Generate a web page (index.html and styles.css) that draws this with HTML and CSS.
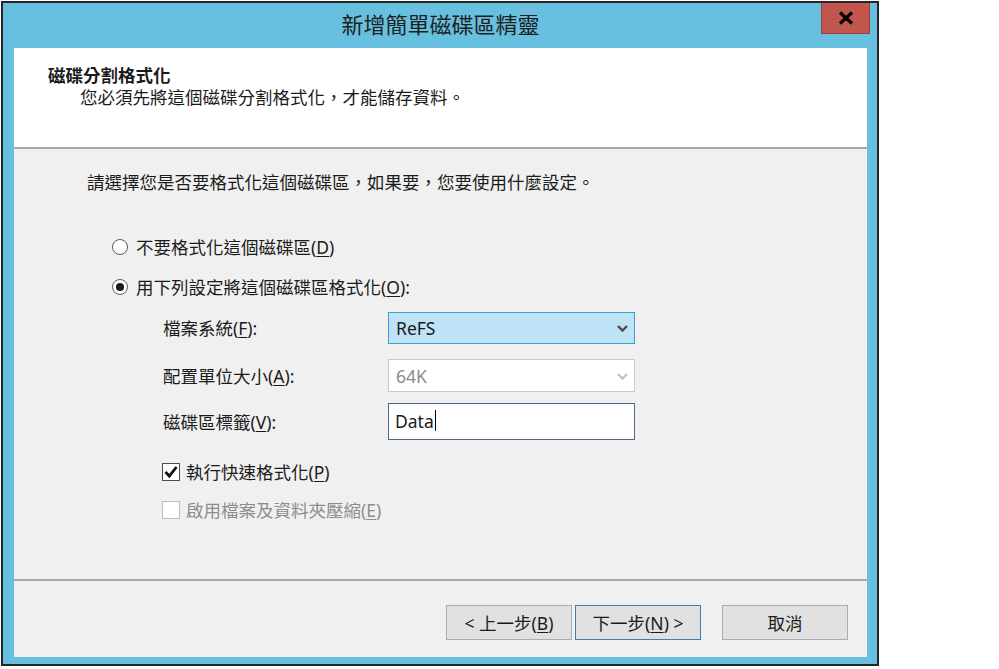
FILE: index.html
```html
<!DOCTYPE html>
<html lang="zh-Hant">
<head>
<meta charset="utf-8">
<title>新增簡單磁碟區精靈</title>
<link rel="stylesheet" href="styles.css">
</head>
<body>
<div class="window">
  <div class="titlebar">
    <div class="tb-spacer"></div>
    <div class="tb-title">新增簡單磁碟區精靈</div>
    <div class="tb-right">
      <div class="close-btn">
        <svg width="16" height="14" viewBox="0 0 16 14"><path d="M2 1.5 L14 12.5 M14 1.5 L2 12.5" stroke="#000" stroke-width="3.2" stroke-linecap="butt"/></svg>
      </div>
    </div>
  </div>
  <div class="client">
    <div class="header">
      <div class="h-title">磁碟分割格式化</div>
      <div class="h-sub">您必須先將這個磁碟分割格式化，才能儲存資料。</div>
    </div>
    <div class="body">
      <div class="question">請選擇您是否要格式化這個磁碟區，如果要，您要使用什麼設定。</div>
      <div class="radio-row first">
        <span class="radio"></span>
        <span class="label">不要格式化這個磁碟區(<u>D</u>)</span>
      </div>
      <div class="radio-row second">
        <span class="radio checked"><span class="dot"></span></span>
        <span class="label">用下列設定將這個磁碟區格式化(<u>O</u>):</span>
      </div>
      <div class="form-row r1">
        <span class="f-label">檔案系統(<u>F</u>):</span>
        <div class="select active">
          <span class="sel-text">ReFS</span>
          <svg class="chev" width="11" height="7" viewBox="0 0 11 7"><path d="M1 1 L5.5 5.5 L10 1" fill="none" stroke="#4a4a4a" stroke-width="2.4"/></svg>
        </div>
      </div>
      <div class="form-row r2">
        <span class="f-label">配置單位大小(<u>A</u>):</span>
        <div class="select disabled">
          <span class="sel-text">64K</span>
          <svg class="chev" width="11" height="7" viewBox="0 0 11 7"><path d="M1 1 L5.5 5.5 L10 1" fill="none" stroke="#c4c4c4" stroke-width="2.4"/></svg>
        </div>
      </div>
      <div class="form-row r3">
        <span class="f-label">磁碟區標籤(<u>V</u>):</span>
        <div class="textbox"><span class="tb-text">Data</span><span class="caret"></span></div>
      </div>
      <div class="check-row c1">
        <span class="checkbox">
          <svg width="16" height="16" viewBox="0 0 16 16"><path d="M2.5 8 L6.3 12 L13.5 3" fill="none" stroke="#111" stroke-width="2.8"/></svg>
        </span>
        <span class="label">執行快速格式化(<u>P</u>)</span>
      </div>
      <div class="check-row c2">
        <span class="checkbox disabled"></span>
        <span class="label dim">啟用檔案及資料夾壓縮(<u>E</u>)</span>
      </div>
    </div>
    <div class="footer">
      <div class="btn">&lt; 上一步(<u>B</u>)</div>
      <div class="btn default">下一步(<u>N</u>) &gt;</div>
      <div class="btn cancel">取消</div>
    </div>
  </div>
</div>
</body>
</html>
```
FILE: styles.css
```css
* { box-sizing: border-box; }
html, body { margin: 0; padding: 0; background: #ffffff; }
body {
  font-family: "Noto Sans", "Noto Sans CJK TC", sans-serif;
  font-size: 17.5px;
  line-height: 22px;
  color: #1b1b1b;
}
u { text-decoration: underline; text-underline-offset: 2px; text-decoration-thickness: 1px; }

.window {
  margin: 1px 0 0 1px;
  width: 878px;
  height: 665px;
  border: 2px solid #262626;
  background: #67c0df;
  padding: 0 10px 7px 11px;
  display: flex;
  flex-direction: column;
}

.titlebar {
  height: 45px;
  display: grid;
  grid-template-columns: 1fr auto 1fr;
  align-items: start;
}
.tb-title {
  font-family: "Noto Sans CJK TC", sans-serif;
  font-size: 22px;
  line-height: 40px;
  color: #1e1e1e;
}
.tb-right { display: flex; justify-content: flex-end; }
.close-btn {
  width: 49px;
  height: 31px;
  margin-right: -3px;
  background: #c2564f;
  border: 1px solid #9b413b;
  border-top: none;
  display: flex;
  align-items: center;
  justify-content: center;
}

.client {
  flex: 1;
  background: #f0f0f0;
  display: flex;
  flex-direction: column;
}

.header {
  height: 101px;
  background: #ffffff;
  border-bottom: 2px solid #a9a9a9;
  padding: 16px 0 0 34px;
}
.h-title { font-family: "Noto Sans CJK TC", sans-serif; font-weight: bold; }
.h-sub { margin-left: 32px; }

.body {
  flex: 1;
  padding: 22px 0 0 73px;
}

.radio-row, .check-row {
  display: flex;
  align-items: center;
  height: 22px;
}
.radio-row.first { margin-top: 43px; margin-left: 25px; }
.radio-row.second { margin-top: 18px; margin-left: 25px; }
.radio {
  width: 16px;
  height: 16px;
  border-radius: 50%;
  border: 1px solid #5a5a5a;
  background: #ffffff;
  display: flex;
  align-items: center;
  justify-content: center;
  margin-right: 8px;
}
.radio .dot { width: 8px; height: 8px; border-radius: 50%; background: #1a1a1a; }

.form-row {
  display: flex;
  align-items: center;
  margin-left: 76px;
}
.form-row.r1 { margin-top: 14px; }
.form-row.r2 { margin-top: 15px; }
.form-row.r3 { margin-top: 11px; }
.f-label { width: 225px; }

.select {
  width: 247px;
  height: 32px;
  display: flex;
  align-items: center;
  justify-content: space-between;
  padding: 0 6px 0 7px;
  border: 1px solid #c9c9c9;
  background: #ffffff;
}
.select.active { background: #bee2f6; border-color: #3e9ed7; }
.select.disabled { height: 33px; color: #8a8a8a; }
.chev { margin-top: 1px; }

.textbox {
  width: 247px;
  height: 37px;
  border: 1px solid #4c6a88;
  background: #ffffff;
  display: flex;
  align-items: center;
  padding-left: 6px;
}
.tb-text { margin-top: -2px; }
.caret { width: 1px; height: 21px; background: #000; margin-left: 1px; margin-top: -2px; }

.check-row { margin-left: 75px; }
.check-row.c1 { margin-top: 21px; }
.check-row.c2 { margin-top: 16px; }
.checkbox {
  width: 18px;
  height: 18px;
  border: 1px solid #4a4a4a;
  background: #ffffff;
  display: flex;
  align-items: center;
  justify-content: center;
  margin-right: 6px;
}
.checkbox.disabled { border-color: #bcbcbc; }
.label.dim { color: #8d8d8d; }

.footer {
  height: 78px;
  border-top: 2px solid #a9a9a9;
  display: flex;
  justify-content: flex-end;
  padding: 24px 19px 0 0;
}
.btn {
  width: 126px;
  height: 35px;
  background: #e1e1e1;
  border: 1px solid #acacac;
  display: flex;
  align-items: center;
  justify-content: center;
  white-space: pre;
}
.btn.default { margin-left: 3px; border-color: #3c7fb1; }
.btn.cancel { margin-left: 21px; }
```
